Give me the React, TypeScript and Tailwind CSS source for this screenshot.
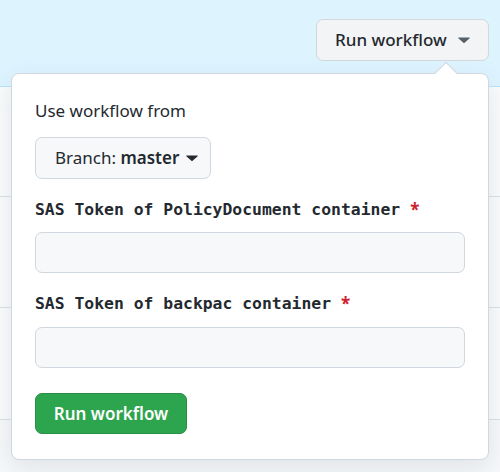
import React from 'react';

function Caret({ className }: { className?: string }) {
    return (
        <svg viewBox="0 0 12 7" width="12" height="7" className={className} fill="currentColor">
            <path d="M0.6 0.5h10.8a.4.4 0 0 1 .28.68L6.28 6.1a.4.4 0 0 1-.56 0L.32 1.18A.4.4 0 0 1 .6.5Z" />
        </svg>
    );
}

export default function App() {
    const sans = "font-['Noto_Sans','Liberation_Sans',sans-serif]";
    const mono = "font-['DejaVu_Sans_Mono','Liberation_Mono',monospace]";

    return (
        <div className={`relative h-[472px] w-[500px] overflow-hidden bg-[#f6f8fa] ${sans} text-[#24292f]`}>
            <div className="flex h-[87px] justify-end border-b border-[#b6e3ff] bg-[#ddf4ff] pr-[11px] pt-[19px]">
                <button
                    type="button"
                    className="flex h-[42px] w-[173px] items-center gap-[11px] rounded-[7px] border border-[#d0d7de] bg-[#f3f4f6] pl-[18px] text-[17px] font-medium"
                >
                    Run workflow
                    <Caret className="text-[#57606a]" />
                </button>
            </div>

            <div className="flex flex-col">
                <div className="h-[110px] border-b border-[#d8dee4] bg-white/40" />
                <div className="h-[111px] border-b border-[#d8dee4] bg-white/40" />
                <div className="h-[112px] border-b border-[#d8dee4] bg-white/40" />
            </div>

            <div className="absolute left-[11px] top-[73px] h-[387px] w-[478px] rounded-[8px] border border-[#d0d7de] bg-white px-[23px] pt-[25px] shadow-[0_8px_24px_rgba(140,149,159,0.2)]">
                <div className="absolute -top-[9px] right-[34px] h-[16px] w-[16px] rotate-45 border-l border-t border-[#d0d7de] bg-white" />

                <div className="text-[17px] leading-[24px]">Use workflow from</div>

                <button
                    type="button"
                    className="mt-[14px] flex h-[42px] w-[176px] items-center gap-[7px] rounded-[7px] border border-[#d0d7de] bg-[#f6f8fa] pl-[19px] text-[17px]"
                >
                    <span>
                        Branch: <span className="font-semibold">master</span>
                    </span>
                    <Caret className="text-[#24292f]" />
                </button>

                <div className={`mt-[19px] flex h-[24px] items-center text-[16.4px] font-bold ${mono}`}>
                    SAS Token of PolicyDocument container
                    <span className={`ml-[10px] text-[17px] text-[#cf222e] ${sans}`}>*</span>
                </div>
                <input className="mt-[10px] block h-[41px] w-full rounded-[7px] border border-[#d0d7de] bg-[#f6f8fa] outline-none" />

                <div className={`mt-[19px] flex h-[24px] items-center text-[16.4px] font-bold ${mono}`}>
                    SAS Token of backpac container
                    <span className={`ml-[10px] text-[17px] text-[#cf222e] ${sans}`}>*</span>
                </div>
                <input className="mt-[11px] block h-[41px] w-full rounded-[7px] border border-[#d0d7de] bg-[#f6f8fa] outline-none" />

                <button
                    type="button"
                    className="mt-[25px] flex h-[41px] w-[152px] items-center justify-center rounded-[7px] border border-[#298e46] bg-[#2da44e] text-[17px] font-semibold text-white"
                >
                    Run workflow
                </button>
            </div>
        </div>
    );
}
